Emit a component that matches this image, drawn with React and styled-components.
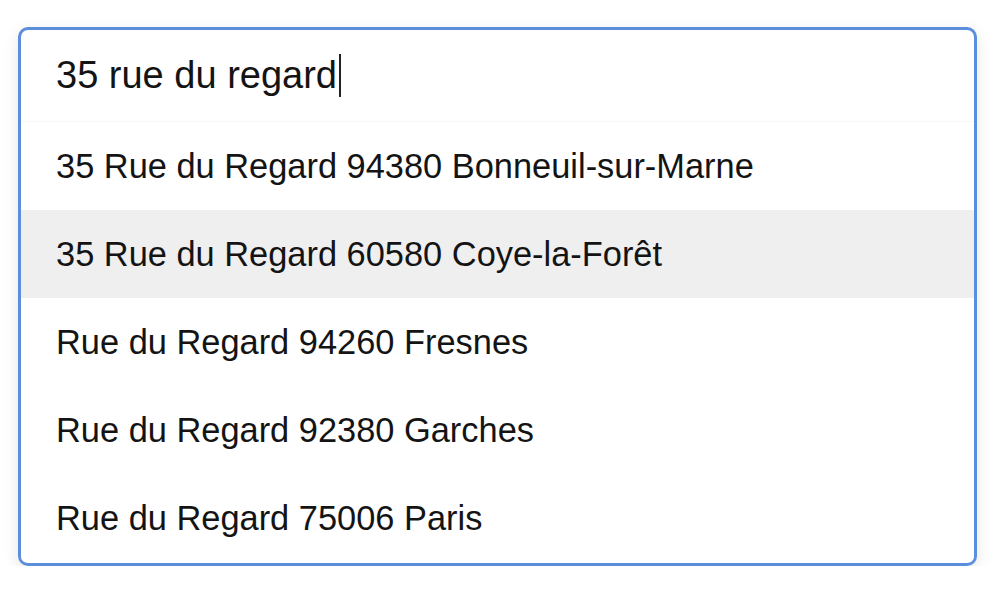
import React, {useState} from "react";
import styled, {createGlobalStyle} from "styled-components";

const GlobalStyle = createGlobalStyle`
  html, body {
    margin: 0;
    padding: 0;
    background: #ffffff;
  }
  body {
    font-family: "Liberation Sans", Arial, Helvetica, sans-serif;
    color: #141414;
  }
`;

const Page = styled.div`
  padding: 27px 0 0 18px;
`;

const Combo = styled.div`
  width: 959px;
  height: 539px;
  box-sizing: border-box;
  border: 3px solid #5b8edb;
  border-radius: 10px;
  background: #fff;
  overflow: hidden;
  box-shadow: 0 5px 16px rgba(0, 0, 0, 0.1);
  display: flex;
  flex-direction: column;
`;

const InputRow = styled.div`
  height: 92px;
  flex: none;
  display: flex;
  align-items: center;
  padding-left: 35px;
  font-size: 38px;
  color: #141414;
  border-bottom: 1px solid #f7f7f7;
  box-sizing: border-box;
`;

const Caret = styled.span`
  display: inline-block;
  width: 2px;
  height: 43px;
  margin-left: 2px;
  background: #222;
  vertical-align: middle;
`;

const List = styled.ul`
  list-style: none;
  margin: 0;
  padding: 0;
`;

const Option = styled.li`
  height: 88px;
  display: flex;
  align-items: center;
  padding-left: 35px;
  font-size: 34.4px;
  color: #141414;
  background: ${(props) => (props.$active ? "#efefef" : "#fff")};
  cursor: pointer;
`;

const suggestions = [
    "35 Rue du Regard 94380 Bonneuil-sur-Marne",
    "35 Rue du Regard 60580 Coye-la-Forêt",
    "Rue du Regard 94260 Fresnes",
    "Rue du Regard 92380 Garches",
    "Rue du Regard 75006 Paris",
];

const App = () => {
    const [active, setActive] = useState(1);
    return (
        <>
            <GlobalStyle/>
            <Page>
                <Combo>
                    <InputRow>
                        <span>35 rue du regard</span>
                        <Caret/>
                    </InputRow>
                    <List>
                        {suggestions.map((s, i) => (
                            <Option key={s} $active={i === active} onMouseEnter={() => setActive(i)}>
                                {s}
                            </Option>
                        ))}
                    </List>
                </Combo>
            </Page>
        </>
    );
};

export default App;
